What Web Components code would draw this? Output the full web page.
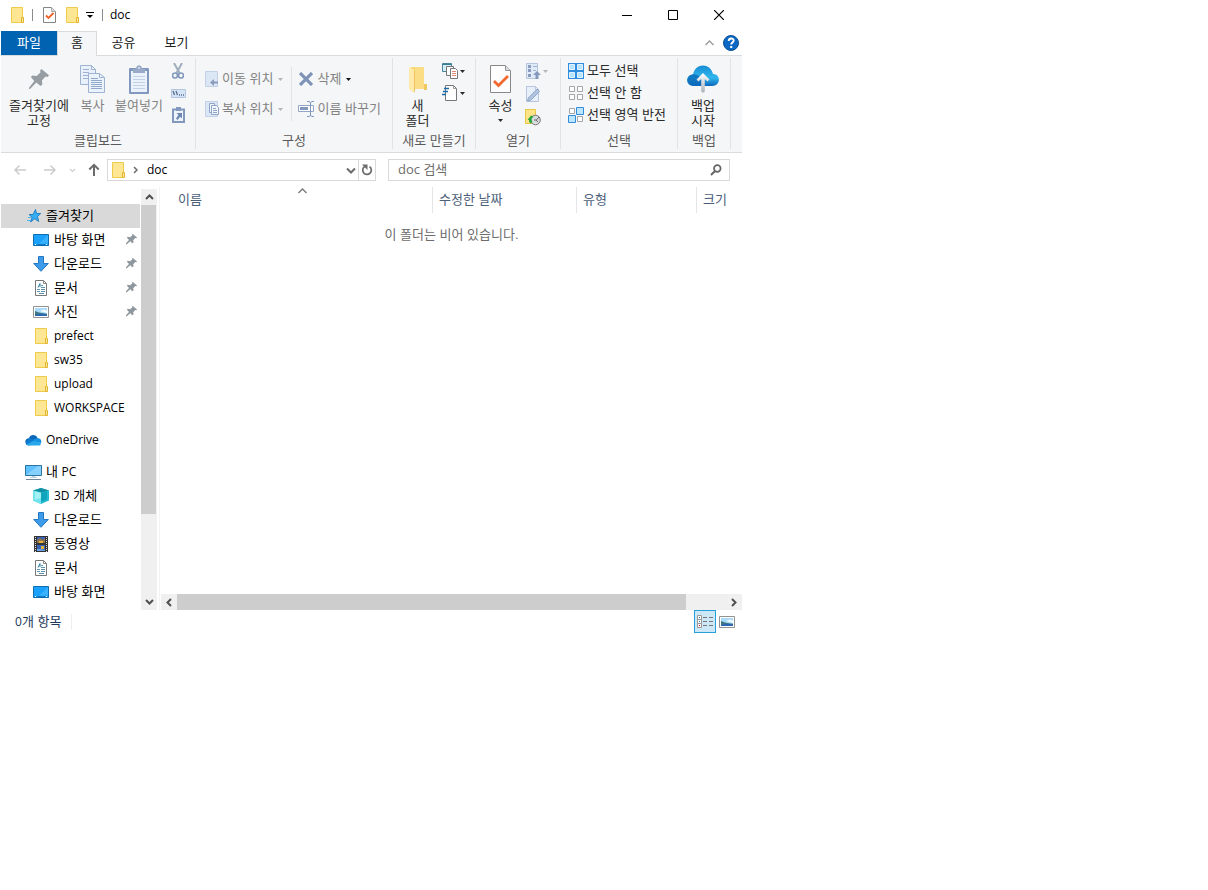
<!DOCTYPE html>
<html lang="ko">
<head>
<meta charset="utf-8">
<title>doc</title>
<style>
html, body { margin: 0; background: #fff; }
body { font: 13px/16px "Liberation Sans", "Noto Sans CJK KR", sans-serif; color: #000; }
</style>
</head>
<body>
<explorer-window></explorer-window>
<script>
const BASE = `<style>
:host,*{box-sizing:border-box}
button,a,input{font:inherit;color:inherit;background:none;border:0;padding:0;margin:0;text-decoration:none;outline:0;text-align:inherit}
.en{font-family:"Open Sans","Noto Sans CJK KR",sans-serif;font-size:12px}
</style>`;

function define(name, markup, setup) {
  const template = document.createElement('template');
  template.innerHTML = BASE + markup;
  customElements.define(name, class extends HTMLElement {
    constructor() {
      super();
      this.attachShadow({ mode: 'open' }).append(template.content.cloneNode(true));
    }
    connectedCallback() {
      if (setup && !this.ready) { this.ready = true; setup(this, this.shadowRoot); }
    }
  });
}

const svg = (w, h, body) => `<svg width="${w}" height="${h}" viewBox="0 0 ${w} ${h}" fill="none" aria-hidden="true">${body}</svg>`;
const FOLDER = svg(14, 16, '<path d="M1.500.5h11v15h-11z" fill="#ffe693" stroke="#edcb4b"/><path d="M11.500 10.500h2v5h-2z" fill="#ffe9a2" stroke="#e3b52c"/>');
const PAGE = '<path d="M.5.5h15l5 5v22H.5z" fill="#fdfdfd" stroke="#888"/><path d="M15.500.5v5h5" fill="#ddd" stroke="#999"/>';
const PIN = '<path d="M8 0l5 4-1 1-1-.3-2.500 2.600.4 2.700-1.300 1-2.600-2.500L1 12H0v-1l3.500-4L1 4.500 2.200 3.300l2.600.5L7.500 1.500 7 1z" fill="#8e979d"/>';
const DESKTOP = svg(16, 14, '<path d="M.5 1.500h15v11H.5z" fill="#1aa1fd" stroke="#0f6cad"/><path d="M15 2v8L6 11z" fill="#3bb2ff"/><path d="M2 11.500h1M13 11.500h1" stroke="#fff"/><path d="M4 11.500h8" stroke="#0c7ac8"/>');
const DOWN = svg(16, 16, '<path d="M5.500.5h5v7h4.800L8 15.300.7 7.500h4.800z" fill="#3d9bea" stroke="#2478c2"/>');
const DOC = svg(14, 16, '<path d="M1.500.5h8l3 3v12h-11z" fill="#fff" stroke="#777"/><path d="M9.500.5v3h3" stroke="#888"/><path d="M4 7.500L6 3.500V7" stroke="#2f7fa9"/><path d="M7 5.500h2M7 7.500h4M3 9.500h3M7 9.500h4M3 11.500h3M7 11.500h4M5 13.500h5" stroke="#5a93b0"/>');
const PHOTO = svg(16, 12, '<path d="M.5.5h15v11H.5z" fill="#fff" stroke="#929292"/><path d="M2 2h12v8H2z" fill="#a9dafa"/><path d="M2 5l4 1.500 4 .7 4 .5V10H2z" fill="#3e7684"/><path d="M2 9l5-1 7 .5V10H2z" fill="#2a65b7"/><path d="M7 5l4-1.500L14 5v2z" fill="#f5fbff"/>');
const ICONS = {
  folder: FOLDER,
  desktop: DESKTOP, down: DOWN, doc: DOC, photo: PHOTO,
  pin: svg(12, 12, PIN.replace('<path', '<path transform="scale(.85)"')),
  bigpin: svg(20, 20, '<path d="M12.500 0L20 6.300l-1.500 1.600-2-.5-3.600 4 .5 4-2 1.500-4-3.500L1 20H0v-1.200L5.300 12 1.800 8l1.700-1.500 4.200.4 3.900-3.700-.7-1.500z" fill="#969ea3"/>'),
  star: svg(16, 16, '<path d="M10.500 1.500l1 4h4.300L12.500 8.500l1.200 5-4-2.700L5.500 14l1.600-4.800L4 6.500h4z" fill="#35adf4" stroke="#0c74bd" stroke-width=".8"/><path d="M3 9.500h3M2 12.500h4" stroke="#49b6f4"/>'),
  cloud: svg(17, 12, '<path d="M4 4.300C5 .2 11 0 12.500 4L9 8 1 9.500C-.7 7 1 4.300 4 4.300z" fill="#0a67bb"/><path d="M7 6l5.500-2c3 0 4.500 3 3.500 5L9 8z" fill="#1490df"/><path d="M4 4.300c2 0 4 1.700 9 5L4 11.500C2 11.500.8 10.700.6 9z" fill="#0f7bd0"/><path d="M1.500 10.500L9.200 6.500l6.600 2.700c.3 1.500-.8 2.300-2 2.300H4c-1 0-2-.3-2.500-1z" fill="#28a8ea"/>'),
  pc: svg(17, 16, '<path d="M.5 1.500h16v10H.5z" fill="#5fc0ff" stroke="#2b749f"/><path d="M1 11L13 2h3v9z" fill="#86d1ff"/><path d="M7 12h3v1H7zM5 13h7v1H5z" fill="#bbd3df"/><path d="M1 15.500h15" stroke="#75889a"/>'),
  cube: svg(16, 16, '<path d="M8 0l8 2.500v10L8 16l-8-3.500v-10z" fill="#25bcd2"/><path d="M8 0l8 2.500-8 2-8-2z" fill="#128fa2"/><path d="M0 2.500l8 2V16l-8-3.500z" fill="#73e4ee"/><path d="M8 5l6-1.500v8L8 14z" fill="#12a3bd"/><path d="M8 5L2 3.500v8L8 10z" fill="#a4f1f5"/>'),
  film: svg(14, 16, '<path d="M0 0h14v16H0z" fill="#343434"/><path d="M3 1h8v6H3zM3 9h8v6H3z" fill="#3861b8"/><path d="M3 4l3-2 3 2 2-2v5H3z" fill="#947446"/><path d="M5 5h4v2H5zM7 10h3v3H7z" fill="#e1b43d"/><path d="M3 13h3l5 1v1H3z" fill="#6aa4e0"/><path d="M1.500 1v15M12.500 1v15" stroke="#ddd" stroke-dasharray="1 1"/>'),
  props: svg(13, 16, '<path d="M.5.5h8l4 4v11H.5z" fill="#fff" stroke="#858585"/><path d="M8.500.5v4h4" fill="#ddd" stroke="#aaa"/><path d="M3 8.500L5.500 11l5-5" stroke="#ef6127" stroke-width="1.800"/>'),
  custom: svg(8, 8, '<path d="M0 1.500h8" stroke="#000"/><path d="M1 4h6L4 7z" fill="#000"/>'),
  caret: svg(5, 3, '<path d="M0 0h5L2.500 3z" fill="currentColor"/>'),
  min: svg(10, 10, '<path d="M0 5.500h10" stroke="#000"/>'),
  max: svg(10, 10, '<path d="M.5.5h9v9h-9z" stroke="#000"/>'),
  close: svg(10, 10, '<path d="M0 0l10 10M10 0L0 10" stroke="#000" stroke-width="1.200"/>'),
  chevup: svg(9, 6, '<path d="M.5 5l4-4 4 4" stroke="currentColor" stroke-width="1.300"/>'),
  help: svg(16, 16, '<circle cx="8" cy="8" r="7.500" fill="#0a67c4" stroke="#075094"/><path d="M5.700 6c0-3.300 5-3.200 5-.4C10.700 7.500 8.200 7.500 8.200 9.500" stroke="#fff" stroke-width="1.900"/><path d="M7.200 11h2v2h-2z" fill="#fff"/>'),
  copy: svg(25, 28, '<g stroke="#9fb2d1"><path d="M.5.5h11l4 4v15H.5z" fill="#e8f0fb"/><path d="M11.500.5v4h4M3 4.500h6M3 7.500h6M3 10.500h6M3 13.500h6" /><path d="M8.500 8.500h11l5 4v15h-16z" fill="#eaf2fc"/><path d="M19.500 8.500v4h5"/><path d="M11 13.500h7M11 15.500h11M11 17.500h11M11 19.500h11M11 21.500h11M11 23.500h11" stroke="#92a8cb"/></g>'),
  paste: svg(20, 29, '<rect y="3" width="20" height="26" rx="1" fill="#8398be"/><path d="M2 6h16v21H2z" fill="#eaf2fb"/><path d="M7 4c0-5 6-5 6 0h3v4H4V4z" fill="#9aabc9"/><path d="M9.500 2h1v2h-1z" fill="#fff"/><path d="M4 11.500h12M4 14.500h12M4 17.500h12M4 20.500h12M4 23.500h12" stroke="#c3d1e6"/>'),
  cut: svg(12, 17, '<path d="M2 0l5.500 10M10 0L4.500 10" stroke="#a1adbd" stroke-width="2"/><circle cx="3" cy="12.500" r="2.500" stroke="#8299bd" stroke-width="1.600"/><circle cx="9" cy="12.500" r="2.500" stroke="#8299bd" stroke-width="1.600"/>'),
  path: svg(15, 9, '<path d="M.5.5h14v8H.5z" fill="#d4e3f5" stroke="#b4c6df"/><path d="M2 2l1.500 4M5 2l1.500 4" stroke="#5a7090" stroke-width="1.300"/><path d="M8 6h1M10 6h1M12 6h1" stroke="#5a7090" stroke-width="1.400"/>'),
  shortcut: svg(13, 16, '<path d="M1 2.500h11V15H1z" fill="#edf4fc" stroke="#8298bd" stroke-width="2"/><path d="M4 0h5v4H4z" fill="#8298bd"/><path d="M4.500 6H10v5.500L8.200 9.800 5.500 13 4 11.500 6.500 8z" fill="#6e87b2"/>'),
  moveto: svg(16, 16, '<path d="M.5.5h12v15H.5z" fill="#dce7f5" stroke="#c3d1e6"/><path d="M5 11.500l4-3.500v2.500h4v2H9V15z" fill="#889bbd"/>'),
  copyto: svg(16, 16, '<path d="M.5.5h12v15H.5z" fill="#dce7f5" stroke="#c3d1e6"/><path d="M4.500 2.500h5v9h-5z" fill="#f2f7fd" stroke="#91a4c5"/><path d="M6.500 4.500h5l2 2v7h-7z" fill="#f2f7fd" stroke="#8fa3c4"/><path d="M8 7.500h3M8 9.500h4M8 11.500h4" stroke="#8fa3c4"/>'),
  del: svg(14, 14, '<path d="M1 1l12 12M13 1L1 13" stroke="#7f93b7" stroke-width="3.200"/>'),
  rename: svg(16, 16, '<path d="M.5 4.500h15v6H.5z" fill="#fff" stroke="#92a5c7"/><path d="M2 6h8v3H2z" fill="#8298bd"/><path d="M9 .5h2l1.500 1L14 .5h2M9 15.500h2l1.500-1 1.500 1h2M12.500 1v14" stroke="#8298bd"/>'),
  newfolder: svg(20, 29, '<path d="M3 2h12l1 2v20H3z" fill="#f9d877"/><path d="M7 2h9v22H7z" fill="#fbdd85"/><path d="M16 19h3v6h-3z" fill="#f0c860"/><path d="M1 2l5 3v23l-5-4z" fill="#ffeaa9"/><path d="M6 5l1 1v20l-1 2z" fill="#edc461"/>'),
  newitem: svg(16, 16, '<path d="M.5.5h9v8h-9z" fill="#d5eef5" stroke="#4c8497"/><path d="M0 1.500h10" stroke="#397f98"/><path d="M4.500 3.500h7v9h-7z" fill="#fff" stroke="#777"/><path d="M8.500 5.500h5l2 2v8h-7z" fill="#fff" stroke="#777"/><path d="M10 8.500h4M10 10.500h4M10 12.500h4" stroke="#e68978"/>'),
  easy: svg(16, 16, '<path d="M3.500.5h8l3 3v12h-11z" fill="#fff" stroke="#777"/><path d="M11.500.5v3h3" stroke="#999"/><path d="M2 3.500h5M1 6.500h5M0 9.500h4" stroke="#1b6ba8" stroke-width="1.300"/>'),
  bigprops: svg(21, 28, PAGE + '<path d="M4 16l4.500 4.500L18 11" stroke="#f2692f" stroke-width="2.800"/>'),
  openw: svg(15, 16, '<path d="M.5.5h11v15H.5z" fill="#e1ebf8" stroke="#b5c5de"/><path d="M2 2h3v3H2zM2 6h3v3H2zM2 11h3v3H2z" fill="#899cbf"/><path d="M7 3.500h4M7 7.500h3" stroke="#a1b3d2"/><path d="M11 8l4 4h-2.500v4h-3v-4H7z" fill="#8498bc"/>'),
  edit: svg(15, 16, '<path d="M.5.5h9l3 3v12H.5z" fill="#e6effa" stroke="#b8c7df"/><path d="M9.500.5v3h3" stroke="#b8c7df"/><path d="M13.500 5.500l-9 9-3 .5.800-3 9-9z" fill="#b0c3df" stroke="#90a5c8"/>'),
  history: svg(16, 17, '<path d="M.5.5h10v14H.5z" fill="#ffe487" stroke="#e8c648"/><circle cx="10.500" cy="11" r="4.800" fill="#d8dcdd" stroke="#777"/><path d="M9 11h2.500L14 8M11 11l2 2" stroke="#666"/><path d="M2.500 11L6 6.500 9 8C6 8.500 6 11 7.500 13l-2 1.500C4 13 4 12 4 11z" fill="#25a53a"/>'),
  selall: svg(16, 16, '<path d="M0 0h16v16H0z" fill="#308ddd"/><path d="M1.500 1.500h5v5h-5zM9.500 1.500h5v5h-5zM1.500 9.500h5v5h-5zM9.500 9.500h5v5h-5z" fill="#b8e3ff" stroke="#dff4ff"/>'),
  selnone: svg(16, 16, '<path d="M1.500 1.500h5v5h-5zM9.500 1.500h5v5h-5zM1.500 9.500h5v5h-5zM9.500 9.500h5v5h-5z" fill="#fff" stroke="#a5a5a5"/>'),
  selinv: svg(16, 16, '<path d="M1.500 1.500h5v5h-5zM9.500 9.500h5v5h-5z" fill="#fff" stroke="#a5a5a5"/><path d="M8.500.5h7v7h-7zM.5 8.500h7v7h-7z" fill="#bce5ff" stroke="#308ddd"/>'),
  backup: svg(32, 28, '<defs><linearGradient id="g" x1="0" y1="0" x2="0" y2="1"><stop stop-color="#168bd3"/><stop offset=".6" stop-color="#30b8ee"/><stop offset="1" stop-color="#0d66bc"/></linearGradient><linearGradient id="h" x1="0" y1="0" x2="0" y2="1"><stop stop-color="#fff"/><stop offset="1" stop-color="#aab2bc"/></linearGradient></defs><path d="M7 21C-2 21-2 10 6 9.500 8-2 23-3 26 9c8 0 8 12-1 12z" fill="url(#g)"/><path d="M8 20C-1 21-2 11 5 9.500c5-1 9 2 13 8l-1 3.500z" fill="#0866b5" opacity=".75"/><path d="M16 8l6.500 6.500-2 2L17.800 14v12q0 1.500-1.800 1.500T14.200 26V14l-2.700 2.500-2-2z" fill="url(#h)"/>'),
  back: svg(14, 12, '<path d="M13 6H2M6.500 1.500L2 6l4.500 4.500" stroke="currentColor" stroke-width="1.500"/>'),
  fwd: svg(14, 12, '<path d="M1 6h11M7.500 1.500L12 6l-4.500 4.500" stroke="currentColor" stroke-width="1.500"/>'),
  up: svg(12, 14, '<path d="M6 13V2M1.300 6.500L6 1.800l4.700 4.700" stroke="currentColor" stroke-width="2"/>'),
  tinydown: svg(7, 5, '<path d="M1 1l2.500 2.500L6 1" stroke="currentColor" stroke-width="1.200"/>'),
  right: svg(5, 8, '<path d="M1 1l3 3-3 3" stroke="currentColor" stroke-width="1.500"/>'),
  boxdown: svg(10, 7, '<path d="M1 1.500l4 4 4-4" stroke="currentColor" stroke-width="2"/>'),
  refresh: svg(12, 12, '<path d="M8.500 2.600A4.300 4.300 0 1 1 4 2.300" stroke="#6b6b6b" stroke-width="1.700"/><path d="M1 .5h5.500V6L4.500 4z" fill="#6b6b6b"/>'),
  search: svg(12, 12, '<circle cx="7.300" cy="4.500" r="3.300" stroke="#666" stroke-width="1.700"/><path d="M5 7L1 11" stroke="#666" stroke-width="2"/>'),
  scup: svg(9, 6, '<path d="M1 5l3.500-3.500L8 5" stroke="#505050" stroke-width="2"/>'),
  scdown: svg(9, 6, '<path d="M1 1l3.500 3.500L8 1" stroke="#505050" stroke-width="2"/>'),
  scleft: svg(6, 9, '<path d="M5 1L1.500 4.500 5 8" stroke="#505050" stroke-width="2"/>'),
  scright: svg(6, 9, '<path d="M1 1l3.500 3.500L1 8" stroke="#505050" stroke-width="2"/>'),
  details: svg(16, 13, '<path d="M.5.5h4v4h-4zM.5 4.500h4v4h-4zM.5 8.500h4v4h-4z" fill="#fff" stroke="#999"/><path d="M2 2h1v1H2z" fill="#178"/><path d="M2 6h1v1H2z" fill="#28e"/><path d="M2 10h1v1H2z" fill="#e00"/><path d="M6 2.500h4M12 2.500h4M6 6.500h4M12 6.500h4M6 10.500h4M12 10.500h4" stroke="#777"/>')
};

define('ui-icon', `<style>:host{display:inline-flex;flex:none;align-items:center;justify-content:center}svg{display:block}i{display:flex}</style><i></i>`,
  (el, root) => { root.querySelector('i').innerHTML = ICONS[el.getAttribute('name')]; });

define('title-bar', `<style>
:host{display:flex;align-items:center;height:31px;padding:0 0 1px 9px}
button{display:flex;align-items:center;justify-content:center}
hr{width:1px;height:12px;border:0;margin:0 10px 0 8px;background:#8b8b8b}
.new{margin:0 7px 0 9px}
.custom + hr{margin-right:7px}
h1{margin:0;font-weight:400;line-height:16px;flex:1}
.win{width:46px;height:30px}
</style>
<button aria-label="폴더"><ui-icon name="folder"></ui-icon></button><hr>
<button aria-label="속성"><ui-icon name="props"></ui-icon></button>
<button class="new" aria-label="새 폴더"><ui-icon name="folder"></ui-icon></button>
<button class="custom" aria-label="사용자 지정"><ui-icon name="custom"></ui-icon></button><hr>
<h1 class="en">doc</h1>
<button class="win" aria-label="최소화"><ui-icon name="min"></ui-icon></button>
<button class="win" aria-label="최대화"><ui-icon name="max"></ui-icon></button>
<button class="win" aria-label="닫기"><ui-icon name="close"></ui-icon></button>`);

define('ribbon-tabs', `<style>
:host{display:flex;height:25px;border-bottom:1px solid #dadbdc}
button{width:53px;height:24px;text-align:center;line-height:22px;color:#222}
.file{width:56px;background:#0063b1;color:#fff}
.on{width:40px;height:25px;border:1px solid #dadbdc;border-bottom:0;background:#f5f6f7;line-height:20px;padding-bottom:2px}
.gap{flex:1}
.fold,.help{width:22px;display:flex;align-items:center;justify-content:center;color:#999}
</style>
<button class="file">파일</button><button class="on">홈</button><button>공유</button><button>보기</button><span class="gap"></span>
<button class="fold" aria-label="리본 최소화"><ui-icon name="chevup"></ui-icon></button>
<button class="help" aria-label="도움말"><ui-icon name="help"></ui-icon></button>`);

define('ribbon-group', `<style>
:host{display:flex;flex-direction:column;border-right:1px solid #e2e3e4;margin:2px 0 3px}
.body{display:flex;height:75px}
.label{text-align:center;line-height:16px;color:#5a5a5a}
</style><div class="body"><slot></slot></div><div class="label"></div>`,
  (el, root) => { root.querySelector('.label').textContent = el.getAttribute('label'); });

define('big-button', `<style>
:host{display:block;text-align:center;color:#2b2b2b}
:host([off]){color:#838383}
button{width:100%;display:flex;flex-direction:column;align-items:center;text-align:center;line-height:15px;padding-top:5px}
ui-icon{height:32px;margin-bottom:3px}
.text{white-space:nowrap}
.drop{height:15px;margin:0}
</style><button><span class="text"><slot></slot></span></button>`,
  (el, root) => {
    const b = root.querySelector('button');
    b.disabled = el.hasAttribute('off');
    b.insertAdjacentHTML('afterbegin', `<ui-icon name="${el.getAttribute('icon')}"></ui-icon>`);
    if (el.hasAttribute('drop')) b.insertAdjacentHTML('beforeend', '<ui-icon class="drop" name="caret"></ui-icon>');
  });

define('small-button', `<style>
:host{display:block;color:#2b2b2b}
:host([off]){color:#838383}
button{display:flex;align-items:center;height:22px;white-space:nowrap}
.main{width:16px}
.text{margin-left:3px}
.drop{margin-left:5px}
:host([compact]) .text{margin-left:1px}
:host([bare]) .text{margin-left:0}
:host([bare]) .drop{margin-left:2px}
:host([off]) .drop{color:#b5b5b5}
:host([dark]) .drop{color:#111}
</style><button><span class="text"><slot></slot></span></button>`,
  (el, root) => {
    const b = root.querySelector('button');
    b.disabled = el.hasAttribute('off');
    if (el.title) b.setAttribute('aria-label', el.title);
    b.insertAdjacentHTML('afterbegin', `<ui-icon class="main" name="${el.getAttribute('icon')}"></ui-icon>`);
    if (el.hasAttribute('drop')) b.insertAdjacentHTML('beforeend', '<ui-icon class="drop" name="caret"></ui-icon>');
  });

define('ribbon-bar', `<style>
:host{display:grid;grid-template-columns:195px 197px 83px 85px 117px 53px;background:#f5f6f7;border-bottom:1px solid #dadbdc}
.stack{display:flex;flex-direction:column;padding-top:2px}
.open{gap:1px}
.select{padding-left:7px}
.wide{padding-top:10px;gap:8px}
.first{padding-left:9px}
.rule{width:1px;height:54px;background:#e2e3e4;margin:9px 6px 0 8px}
</style>
<ribbon-group label="클립보드">
  <big-button icon="bigpin" style="width:76px">즐겨찾기에<br>고정</big-button>
  <big-button icon="copy" off style="width:31px">복사</big-button>
  <big-button icon="paste" off style="width:62px">붙여넣기</big-button>
  <div class="stack"><small-button icon="cut" off bare title="잘라내기"></small-button><small-button icon="path" off bare title="경로 복사"></small-button><small-button icon="shortcut" off bare title="바로 가기 붙여넣기"></small-button></div>
</ribbon-group>
<ribbon-group label="구성">
  <div class="stack wide first"><small-button icon="moveto" off drop compact>이동 위치</small-button><small-button icon="copyto" off drop compact>복사 위치</small-button></div>
  <div class="rule"></div>
  <div class="stack wide"><small-button icon="del" off drop dark>삭제</small-button><small-button icon="rename" off>이름 바꾸기</small-button></div>
</ribbon-group>
<ribbon-group label="새로 만들기">
  <big-button icon="newfolder" style="width:49px">새<br>폴더</big-button>
  <div class="stack"><small-button icon="newitem" drop bare title="새 항목"></small-button><small-button icon="easy" drop bare title="빠른 연결"></small-button></div>
</ribbon-group>
<ribbon-group label="열기">
  <big-button icon="bigprops" drop style="width:49px">속성</big-button>
  <div class="stack open"><small-button icon="openw" off drop bare title="열기"></small-button><small-button icon="edit" off bare title="편집"></small-button><small-button icon="history" bare title="히스토리"></small-button></div>
</ribbon-group>
<ribbon-group label="선택">
  <div class="stack select"><small-button icon="selall">모두 선택</small-button><small-button icon="selnone">선택 안 함</small-button><small-button icon="selinv">선택 영역 반전</small-button></div>
</ribbon-group>
<ribbon-group label="백업"><big-button icon="backup" style="width:50px">백업<br>시작</big-button></ribbon-group>`);

define('address-bar', `<style>
:host{display:flex;align-items:center;height:34px;padding:0 12px 0 11px;color:#6b6b6b}
button{display:flex;align-items:center;justify-content:center;height:20px;width:15px}
button:disabled{color:#ccc}
.fwd{margin-left:15px}
.recent{margin-left:8px}
.up{margin-left:6px}
.box{display:flex;align-items:center;height:22px;border:1px solid #d9d9d9}
.path{flex:1 1 269px;margin-left:6px;padding-left:3px}
.find{flex:1 1 342px;margin-left:12px;padding:0 6px 0 9px}
.path a{flex:1;color:#000;margin-left:9px}
.path ui-icon[name=right]{margin-left:8px}
input{flex:1;min-width:0;height:20px;padding-bottom:2px;color:#6d6d6d;font-family:"Open Sans","Noto Sans CJK KR",sans-serif}
input::placeholder{color:#6d6d6d;opacity:1}
.go{width:17px;border-left:1px solid #d9d9d9}
</style>
<button disabled aria-label="뒤로"><ui-icon name="back"></ui-icon></button>
<button class="fwd" disabled aria-label="앞으로"><ui-icon name="fwd"></ui-icon></button>
<button class="recent" disabled aria-label="최근 위치"><ui-icon name="tinydown"></ui-icon></button>
<button class="up" aria-label="위로"><ui-icon name="up"></ui-icon></button>
<div class="box path"><ui-icon name="folder"></ui-icon><ui-icon name="right"></ui-icon><a class="en" href="#doc">doc</a>
<button aria-label="이전 위치"><ui-icon name="boxdown"></ui-icon></button><button class="go" aria-label="새로 고침"><ui-icon name="refresh"></ui-icon></button></div>
<div class="box find"><input type="text" aria-label="doc 검색" placeholder="doc 검색"><button aria-label="검색"><ui-icon name="search"></ui-icon></button></div>`);

define('nav-item', `<style>
:host{display:block}
:host([root]){margin-top:8px}
:host([root]:first-child){margin-top:0}
a{display:flex;align-items:center;height:24px;padding:0 2px 0 32px}
:host([root]) a{padding-left:24px}
:host([selected]) a{background:#d9d9d9}
.main{width:16px;height:16px}
.text{flex:1;margin-left:5px;white-space:nowrap;line-height:24px}
</style><a href="#"><span class="text"><slot></slot></span></a>`,
  (el, root) => {
    const a = root.querySelector('a');
    a.insertAdjacentHTML('afterbegin', `<ui-icon class="main" name="${el.getAttribute('icon')}"></ui-icon>`);
    if (el.hasAttribute('pinned')) a.insertAdjacentHTML('beforeend', '<ui-icon name="pin"></ui-icon>');
  });

define('scroll-bar', `<style>
:host{display:flex;background:#f0f0f0}
:host([vertical]){flex-direction:column;width:16px;border-right:1px solid #f0f0f0}
:host(:not([vertical])){height:16px}
button{flex:none;width:16px;height:16px;display:flex;align-items:center;justify-content:center}
.thumb{background:#cdcdcd}
</style><button></button><div class="thumb"></div><div class="rest"></div><button></button>`,
  (el, root) => {
    const v = el.hasAttribute('vertical');
    const [a, z] = root.querySelectorAll('button');
    a.setAttribute('aria-label', v ? '위로 스크롤' : '왼쪽으로 스크롤');
    z.setAttribute('aria-label', v ? '아래로 스크롤' : '오른쪽으로 스크롤');
    a.innerHTML = `<ui-icon name="${v ? 'scup' : 'scleft'}"></ui-icon>`;
    z.innerHTML = `<ui-icon name="${v ? 'scdown' : 'scright'}"></ui-icon>`;
    root.querySelector('.thumb').style.flex = el.getAttribute('thumb');
    root.querySelector('.rest').style.flex = el.getAttribute('rest');
  });

define('nav-tree', `<style>
:host{display:flex;flex:none;width:158px}
nav{flex:1;padding:17px 1px 6px 0}
scroll-bar{margin:2px 2px 0 0}
</style>
<nav aria-label="탐색 창">
<nav-item icon="star" root selected>즐겨찾기</nav-item>
<nav-item icon="desktop" pinned>바탕 화면</nav-item>
<nav-item icon="down" pinned>다운로드</nav-item>
<nav-item icon="doc" pinned>문서</nav-item>
<nav-item icon="photo" pinned>사진</nav-item>
<nav-item icon="folder"><span class="en">prefect</span></nav-item>
<nav-item icon="folder"><span class="en">sw35</span></nav-item>
<nav-item icon="folder"><span class="en">upload</span></nav-item>
<nav-item icon="folder"><span class="en">WORKSPACE</span></nav-item>
<nav-item icon="cloud" root><span class="en">OneDrive</span></nav-item>
<nav-item icon="pc" root>내 <span class="en">PC</span></nav-item>
<nav-item icon="cube"><span class="en">3D</span> 개체</nav-item>
<nav-item icon="down">다운로드</nav-item>
<nav-item icon="film">동영상</nav-item>
<nav-item icon="doc">문서</nav-item>
<nav-item icon="desktop">바탕 화면</nav-item>
</nav><scroll-bar vertical thumb="309" rest="80"></scroll-bar>`);

define('file-list', `<style>
:host{display:flex;flex-direction:column;flex:1;min-width:0;border-left:1px solid #f3f3f3;padding-left:1px;position:relative}
table{border-collapse:separate;border-spacing:0;table-layout:fixed;width:100%}
th{font-weight:400;text-align:left;height:26px;padding:0 0 0 6px;border-right:1px solid #e5e5e5;color:#4c607a;white-space:nowrap}
th:first-child{padding-left:17px}
th:last-child{border:0}
td{padding:14px 0 0;text-align:center;color:#6d6d6d}
.sort{position:absolute;top:1px;left:138px;color:#777}
.space{flex:1}
</style>
<table><colgroup><col style="width:272px"><col style="width:144px"><col style="width:120px"><col></colgroup>
<thead><tr><th aria-sort="ascending">이름<ui-icon class="sort" name="chevup"></ui-icon></th><th>수정한 날짜</th><th>유형</th><th>크기</th></tr></thead>
<tbody><tr><td colspan="4">이 폴더는 비어 있습니다.</td></tr></tbody></table>
<div class="space"></div>
<scroll-bar thumb="508" rest="40"></scroll-bar>`);

define('status-bar', `<style>
:host{display:flex;height:24px;padding:0 4px 0 14px;color:#1e395b;align-items:center}
span.count{padding-right:10px;border-right:1px solid #eee;height:16px;line-height:16px;flex:none}
.gap{flex:1}
button{width:22px;height:23px;display:flex;align-items:center;justify-content:center;align-self:flex-start}
.on{background:#cce8f6;border:1px solid #26a0da}
</style><span class="count"><span class="en">0</span>개 항목</span><span class="gap"></span>
<button class="on" aria-label="자세히"><ui-icon name="details"></ui-icon></button><button aria-label="큰 아이콘"><ui-icon name="photo"></ui-icon></button>`);

define('explorer-window', `<style>
:host{display:block;max-width:742px;padding-left:1px}
main{display:flex}
</style>
<title-bar></title-bar><ribbon-tabs></ribbon-tabs><ribbon-bar></ribbon-bar><address-bar></address-bar>
<main><nav-tree></nav-tree><file-list></file-list></main><status-bar></status-bar>`);
</script>
</body>
</html>
